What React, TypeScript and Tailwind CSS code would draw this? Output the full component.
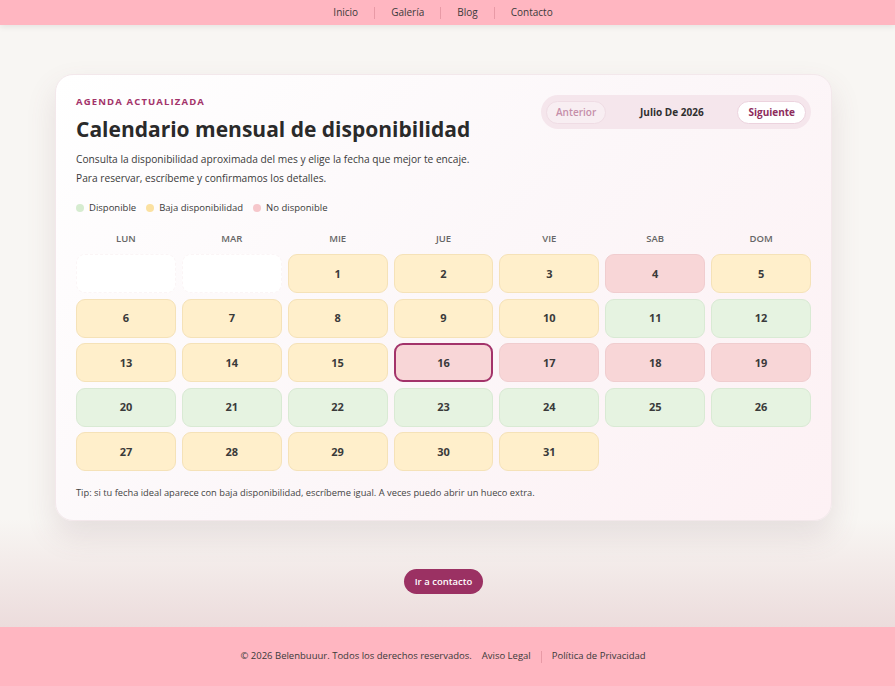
import React from "react";

type Estado = "vacio" | "baja" | "no" | "si";

const dias: { n?: number; e: Estado; sel?: boolean }[] = [
  { e: "vacio" }, { e: "vacio" },
  { n: 1, e: "baja" }, { n: 2, e: "baja" }, { n: 3, e: "baja" }, { n: 4, e: "no" }, { n: 5, e: "baja" },
  { n: 6, e: "baja" }, { n: 7, e: "baja" }, { n: 8, e: "baja" }, { n: 9, e: "baja" }, { n: 10, e: "baja" }, { n: 11, e: "si" }, { n: 12, e: "si" },
  { n: 13, e: "baja" }, { n: 14, e: "baja" }, { n: 15, e: "baja" }, { n: 16, e: "no", sel: true }, { n: 17, e: "no" }, { n: 18, e: "no" }, { n: 19, e: "no" },
  { n: 20, e: "si" }, { n: 21, e: "si" }, { n: 22, e: "si" }, { n: 23, e: "si" }, { n: 24, e: "si" }, { n: 25, e: "si" }, { n: 26, e: "si" },
  { n: 27, e: "baja" }, { n: 28, e: "baja" }, { n: 29, e: "baja" }, { n: 30, e: "baja" }, { n: 31, e: "baja" },
];

const estilos: Record<Estado, string> = {
  vacio: "bg-white border border-dashed border-[#fbf5f6]",
  baja: "bg-[#ffefcb] border border-[#f5e2b8]",
  no: "bg-[#f8d6d7] border border-[#f0cdcf]",
  si: "bg-[#e6f3e1] border border-[#d9ead4]",
};

const semana = ["LUN", "MAR", "MIE", "JUE", "VIE", "SAB", "DOM"];

export default function App() {
  return (
    <div className="h-[686px] overflow-hidden flex flex-col bg-[#f8f6f3] text-[#2b2b2b] font-['Open_Sans',sans-serif]">
      {/* Menu de arriba */}
      <header className="h-[25px] shrink-0 pr-[9px] bg-[#ffb6c1] shadow-[0_2px_6px_rgba(0,0,0,0.08)] flex items-center justify-center text-[10px] text-[#3a3a3a] relative z-10">
        <nav className="flex items-center">
          <a className="px-4">Inicio</a>
          <span className="w-px h-3 bg-[#e89aa6]" />
          <a className="px-4">Galería</a>
          <span className="w-px h-3 bg-[#e89aa6]" />
          <a className="px-4">Blog</a>
          <span className="w-px h-3 bg-[#e89aa6]" />
          <a className="px-4">Contacto</a>
        </nav>
      </header>

      <main className="flex-1 flex flex-col items-center pr-[8px] pt-[49px] bg-[linear-gradient(to_bottom,#f8f6f3_0%,#f8f6f3_82%,#ecdcdc_100%)]">
        {/* Tarjeta del calendario */}
        <section className="w-[777px] rounded-[18px] border border-[#f3e8eb] bg-[linear-gradient(135deg,#ffffff_0%,#fcf7f9_50%,#fdf1f4_100%)] shadow-[0_14px_30px_rgba(120,80,90,0.14)] px-5 pt-[20px] pb-[20px]">
          <div className="flex justify-between items-start">
            <div>
              <p className="text-[9.5px] font-bold tracking-[0.12em] text-[#a3336a] leading-[14px]">AGENDA ACTUALIZADA</p>
              <h1 className="text-[21px] font-bold leading-[30px] mt-[5px] text-[#2a2a2a]">Calendario mensual de disponibilidad</h1>
              <p className="text-[10.2px] leading-[19px] mt-[6px] text-[#3a3a3a]">
                Consulta la disponibilidad aproximada del mes y elige la fecha que mejor te encaje.
                <br />
                Para reservar, escríbeme y confirmamos los detalles.
              </p>
            </div>
            <div className="w-[270px] h-[34px] rounded-full bg-[#f5e6ec] flex items-center justify-between px-[5px]">
              <button className="h-[23px] px-[9px] rounded-full border border-[#efdce4] bg-[#f8eef2] text-[10px] font-semibold text-[#c68ea9]">Anterior</button>
              <span className="text-[10px] font-bold text-[#2f2f2f]">Julio De 2026</span>
              <button className="h-[23px] px-[10px] rounded-full border border-[#ecd3de] bg-white text-[10px] font-bold text-[#8e2c5c]">Siguiente</button>
            </div>
          </div>

          {/* Leyenda */}
          <div className="flex items-center gap-[10px] mt-[13px] text-[9.5px] text-[#3a3a3a]">
            <span className="flex items-center gap-[5px]"><i className="w-[8px] h-[8px] rounded-full bg-[#d6ecd0]" />Disponible</span>
            <span className="flex items-center gap-[5px]"><i className="w-[8px] h-[8px] rounded-full bg-[#fbe1a1]" />Baja disponibilidad</span>
            <span className="flex items-center gap-[5px]"><i className="w-[8px] h-[8px] rounded-full bg-[#f6c7cb]" />No disponible</span>
          </div>

          {/* Dias de la semana */}
          <div className="grid grid-cols-7 gap-x-[6px] mt-[17px]">
            {semana.map((d) => (
              <div key={d} className="text-center text-[9.5px] font-semibold text-[#666] leading-[14px]">{d}</div>
            ))}
          </div>

          {/* Calendario */}
          <div className="grid grid-cols-7 gap-x-[6px] gap-y-[5.5px] mt-[8px]">
            {dias.map((d, i) => (
              <div
                key={i}
                className={`h-[39px] rounded-[9px] flex items-center justify-center text-[11px] font-bold text-[#3a3a3a] ${estilos[d.e]} ${d.sel ? "border-2 !border-[#a3336a]" : ""}`}
              >
                {d.n}
              </div>
            ))}
          </div>

          <p className="text-[9.3px] text-[#444] mt-[15px] leading-[14px]">
            Tip: si tu fecha ideal aparece con baja disponibilidad, escríbeme igual. A veces puedo abrir un hueco extra.
          </p>
        </section>

        <button className="mt-[48px] h-[25px] px-[11px] rounded-full bg-[#9b3163] text-white text-[9.5px] font-semibold">Ir a contacto</button>
      </main>

      {/* Pie */}
      <footer className="h-[59px] shrink-0 pr-[9px] bg-[#ffb6c1] flex items-center justify-center text-[9.5px] text-[#3a3a3a] gap-[10px]">
        <span>© 2026 Belenbuuur. Todos los derechos reservados.</span>
        <span className="flex items-center gap-[10px]">
          <a>Aviso Legal</a>
          <span className="w-px h-3 bg-[#e89aa6]" />
          <a>Política de Privacidad</a>
        </span>
      </footer>
    </div>
  );
}
